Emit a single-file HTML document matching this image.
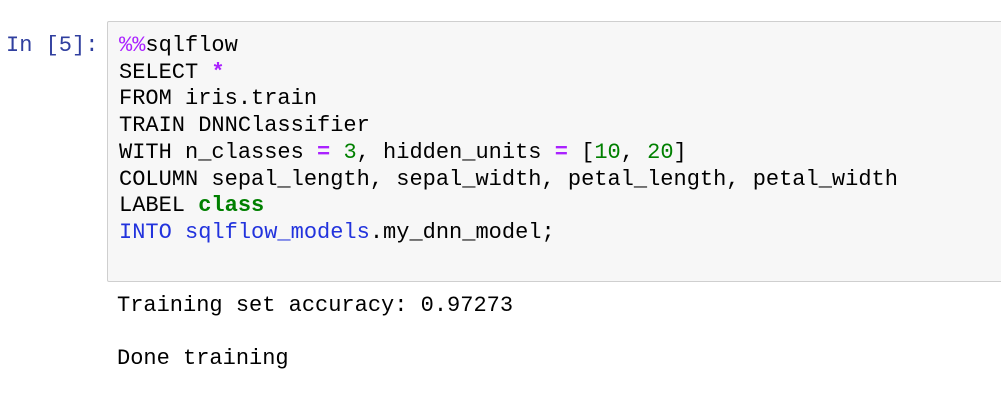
<!DOCTYPE html>
<html><head><meta charset="utf-8"><style>
html,body{margin:0;padding:0;background:#fff;width:1001px;height:400px;overflow:hidden}
body{font-family:"Liberation Mono",monospace;font-size:22px;color:#000}
.prompt{position:absolute;left:6px;top:33px;color:#303F9F;line-height:26.7px;white-space:pre}
.box{position:absolute;left:107px;top:21px;width:900px;height:261px;background:#f7f7f7;border:1px solid #cfcfcf;border-radius:2px;box-sizing:border-box}
.code{position:absolute;left:119px;top:33px;line-height:26.7px;white-space:pre;color:#000}
.m{color:#AA22FF}.o{color:#AA22FF;font-weight:bold}.n{color:#008000}.k{color:#008000;font-weight:bold}.b{color:#2233dd}
.out{position:absolute;left:117px;top:293px;line-height:26.7px;white-space:pre}
</style></head><body>
<div class="prompt">In [5]:</div>
<div class="box"></div>
<div class="code"><span class="m">%%</span>sqlflow
SELECT <span class="o">*</span>
FROM iris.train
TRAIN DNNClassifier
WITH n_classes <span class="o">=</span> <span class="n">3</span>, hidden_units <span class="o">=</span> [<span class="n">10</span>, <span class="n">20</span>]
COLUMN sepal_length, sepal_width, petal_length, petal_width
LABEL <span class="k">class</span>
<span class="b">INTO sqlflow_models</span>.my_dnn_model;</div>
<div class="out">Training set accuracy: 0.97273

Done training</div>
</body></html>
